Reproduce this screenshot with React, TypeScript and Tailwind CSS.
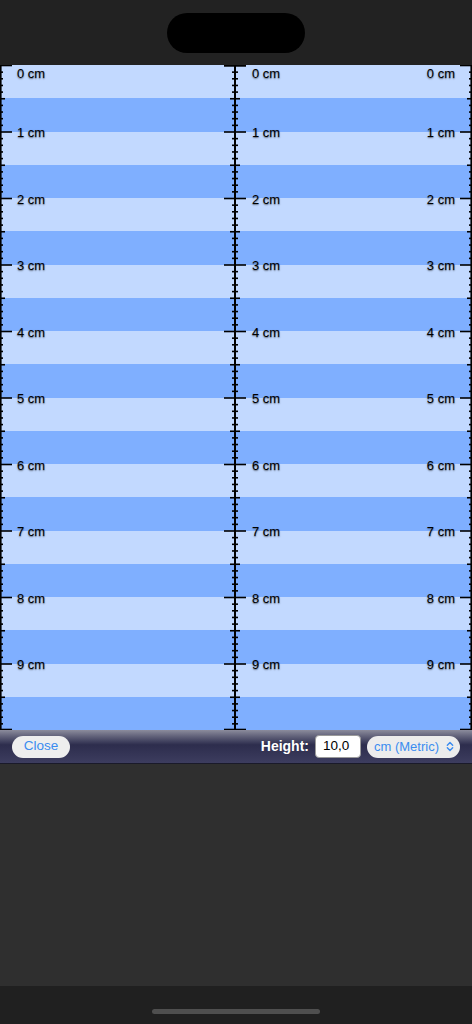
import React from "react";

const CM = 66.5;
const H = 665;

function Ticks() {
  const lines: React.ReactNode[] = [];
  for (let mm = 0; mm <= 100; mm++) {
    const y = Math.min(mm * (CM / 10), H - 1) + 0.5;
    const kind = mm % 10 === 0 ? 2 : mm % 5 === 0 ? 1 : 0;
    const left = [3, 5, 12][kind];
    const mid = [3, 5, 11][kind];
    const right = [3, 5, 12][kind];
    lines.push(
      <g key={mm} stroke="#000" strokeWidth={1.6}>
        <line x1={0} x2={left} y1={y} y2={y} />
        <line x1={235 - mid} x2={235 + mid} y1={y} y2={y} />
        <line x1={472 - right} x2={472} y1={y} y2={y} />
      </g>
    );
  }
  return (
    <svg className="absolute inset-0" width={472} height={H} viewBox={`0 0 472 ${H}`}>
      <line x1={0.8} x2={0.8} y1={0} y2={H} stroke="#000" strokeWidth={1.6} />
      <line x1={235} x2={235} y1={0} y2={H} stroke="#000" strokeWidth={2} />
      <line x1={471.2} x2={471.2} y1={0} y2={H} stroke="#000" strokeWidth={1.6} />
      <line x1={224} x2={246} y1={0.8} y2={0.8} stroke="#000" strokeWidth={1.6} />
      {lines}
    </svg>
  );
}

function Label({ text, className }: { text: string; className: string }) {
  return (
    <span
      className={`absolute text-[13px] leading-4 font-medium text-black [text-shadow:0_1px_1.5px_rgba(0,0,0,0.55)] ${className}`}
    >
      {text}
    </span>
  );
}

export default function App() {
  const bands = Array.from({ length: 20 }, (_, i) => i);
  const cms = Array.from({ length: 10 }, (_, i) => i);

  return (
    <div
      className="w-[472px] h-[1024px] flex flex-col overflow-hidden bg-[#2f2f2f]"
      style={{ fontFamily: '"Liberation Sans", Arial, sans-serif' }}
    >
      <div className="h-[65px] bg-[#222222] flex justify-center pt-[13px]">
        <div className="w-[138px] h-[40px] rounded-full bg-black" />
      </div>

      <div className="relative h-[665px]">
        <div className="flex flex-col h-full">
          {bands.map((i) => (
            <div key={i} className={`flex-1 ${i % 2 === 0 ? "bg-[#c2d9ff]" : "bg-[#7fafff]"}`} />
          ))}
        </div>
        <Ticks />
        {cms.map((i) => {
          const top = i === 0 ? 1 : Math.round(i * CM - 6.5);
          return (
            <div key={i} className="absolute left-0 right-0" style={{ top }}>
              <Label text={`${i} cm`} className="left-[17px]" />
              <Label text={`${i} cm`} className="left-[252px]" />
              <Label text={`${i} cm`} className="right-[17px]" />
            </div>
          );
        })}
      </div>

      <div className="h-[34px] flex items-center px-3 bg-gradient-to-b from-[#8c8c9c] via-[#2d2d4d] via-45% to-[#3d3d5f] border-b border-[#1a1a2a]">
        <button className="h-[22px] w-[58px] rounded-full bg-[#eeeeee] text-[#3b8cf0] text-[13.5px]">
          Close
        </button>
        <div className="flex-1" />
        <span className="text-white font-bold text-[14px] mr-[6px]">Height:</span>
        <div className="h-[23px] w-[46px] bg-white rounded-[4px] border border-[#9a9a9a] text-black text-[13.5px] flex items-center pl-[7px]">
          10,0
        </div>
        <div className="ml-[6px] h-[22px] w-[93px] rounded-full bg-[#ececec] text-[#3b8cf0] text-[13px] flex items-center pl-[7px] pr-[6px] justify-between">
          <span>cm (Metric)</span>
          <svg width="8" height="11" viewBox="0 0 9 12" fill="none" stroke="#3b8cf0" strokeWidth="1.6" strokeLinecap="round" strokeLinejoin="round">
            <path d="M1.5 4.5 L4.5 1.5 L7.5 4.5" />
            <path d="M1.5 7.5 L4.5 10.5 L7.5 7.5" />
          </svg>
        </div>
      </div>

      <div className="flex-1 bg-[#2f2f2f]" />

      <div className="h-[38px] bg-[#202020] flex justify-center pt-[23px]">
        <div className="w-[168px] h-[5px] rounded-full bg-[#4f4f4f]" />
      </div>
    </div>
  );
}
